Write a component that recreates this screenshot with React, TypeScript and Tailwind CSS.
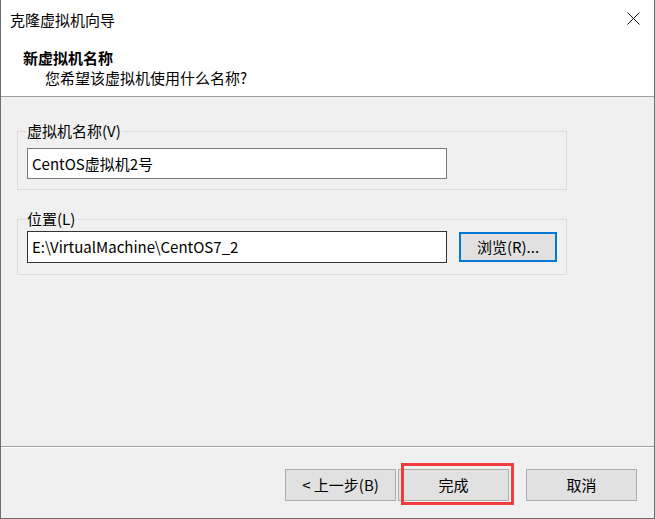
export default function App() {
  const font = { fontFamily: '"Noto Sans CJK SC", "Noto Sans", sans-serif' };

  return (
    <div
      className="w-[655px] h-[519px] flex flex-col bg-[#f0f0f0] border-l border-r border-b border-[#6e6e6e] text-[15px] leading-[20px] text-black"
      style={font}
    >
      {/* title bar + wizard header */}
      <div className="h-[97px] bg-white border-b border-[#a0a0a0] flex flex-col">
        <div className="h-[40px] flex items-center justify-between pl-[9px] pr-[14px]">
          <span>克隆虚拟机向导</span>
          <svg width="13" height="13" viewBox="0 0 13 13" className="mt-[-3px]">
            <path d="M0.5 0.5 L12.5 12.5 M12.5 0.5 L0.5 12.5" stroke="#111" strokeWidth="1" fill="none" />
          </svg>
        </div>
        <div className="mt-[8px] pl-[22px] font-bold">新虚拟机名称</div>
        <div className="pl-[44px]">您希望该虚拟机使用什么名称?</div>
      </div>

      {/* content */}
      <div className="flex-1 pl-[16px] pt-[24px]">
        <fieldset className="w-[550px] border border-[#dcdcdc] pl-[9px] pr-[9px] pb-[10px]">
          <legend className="ml-[-1px] px-[1px] leading-[20px]">虚拟机名称(V)</legend>
          <div className="mt-[7px] w-[420px] h-[31px] bg-white border border-[#7a7a7a] pl-[4px] flex items-center">
            CentOS虚拟机2号
          </div>
        </fieldset>

        <fieldset className="mt-[19px] w-[550px] border border-[#dcdcdc] pl-[9px] pr-[9px] pb-[11px]">
          <legend className="ml-[-1px] px-[1px] leading-[20px]">位置(L)</legend>
          <div className="mt-[2px] flex items-center gap-[12px]">
            <div className="w-[420px] h-[32px] bg-white border border-[#333333] pl-[4px] flex items-center">
              E:\VirtualMachine\CentOS7_2
            </div>
            <button className="w-[98px] h-[30px] bg-[#e1e1e1] border-2 border-[#0078d7] flex items-center justify-center">
              浏览(R)...
            </button>
          </div>
        </fieldset>
      </div>

      {/* footer */}
      <div className="h-[72px] border-t border-[#a0a0a0] flex flex-col">
        <div className="h-px bg-white" />
        <div className="pt-[21px] pl-[284px] flex">
          <button className="w-[111px] h-[32px] bg-[#e1e1e1] border border-[#adadad] flex items-center justify-center">
            &lt; 上一步(B)
          </button>
          <div className="relative ml-[2px]">
            <button className="w-[111px] h-[32px] bg-[#e1e1e1] border border-[#adadad] flex items-center justify-center">
              完成
            </button>
            <div className="absolute left-[3px] top-[-6px] w-[113px] h-[42px] border-[3px] border-[#f03c3c] pointer-events-none" />
          </div>
          <button className="ml-[17px] w-[111px] h-[32px] bg-[#e1e1e1] border border-[#adadad] flex items-center justify-center">
            取消
          </button>
        </div>
      </div>
    </div>
  );
}
